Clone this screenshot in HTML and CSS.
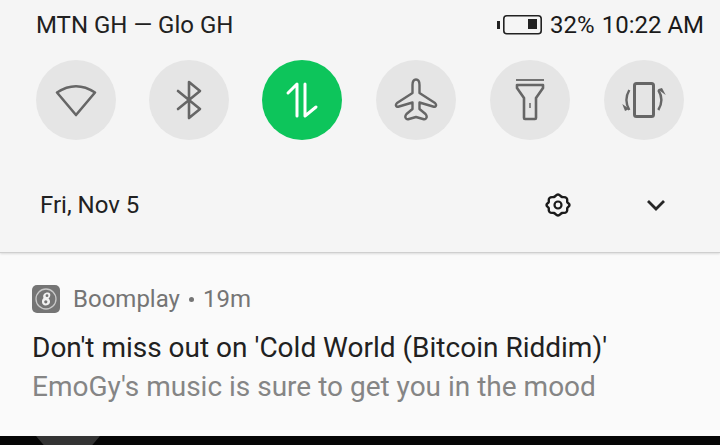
FILE: index.html
```html
<!DOCTYPE html>
<html lang="en">
<head>
    <meta charset="UTF-8">
    <title>Quick settings</title>
    <link rel="stylesheet" href="styles.css">
</head>
<body>
    <div class="shade">
        <div class="status">
            <span class="carrier">MTN GH — Glo GH</span>
            <div class="status-right">
                <svg class="battery" width="45" height="20" viewBox="0 0 45 20">
                    <rect x="0" y="6" width="3" height="8" fill="#222"/>
                    <rect x="6.800" y="0.800" width="37.400" height="18" rx="3" fill="none" stroke="#222" stroke-width="1.600"/>
                    <rect x="31" y="4" width="9" height="10" fill="#222"/>
                </svg>
                <span class="percent">32%</span>
                <span class="clock">10:22 AM</span>
            </div>
        </div>

        <div class="tiles">
            <div class="tile">
                <svg width="44" height="44" viewBox="0 0 44 44"><path d="M3 14.500Q22 2 41 14.500L22 37Z" fill="none" stroke="#666" stroke-width="2.600" stroke-linejoin="round"/></svg>
            </div>
            <div class="tile">
                <svg width="44" height="44" viewBox="0 0 44 44"><path d="M11 13L33 31L22 40V4L33 13L11 31" fill="none" stroke="#666" stroke-width="2.600" stroke-linejoin="round" stroke-linecap="round"/></svg>
            </div>
            <div class="tile tile-on">
                <svg width="44" height="44" viewBox="0 0 44 44"><path d="M8 15L17 6V38M36 29L25 38V6" fill="none" stroke="#fff" stroke-width="3" stroke-linecap="round" stroke-linejoin="round"/></svg>
            </div>
            <div class="tile">
                <svg width="44" height="44" viewBox="0 0 44 44"><path d="M22 1.500C24.500 1.500 25.500 4 25.500 7V15L41 25C43 27 42 29.500 39 28.500L25.500 24.500V31L31.500 36C34 39 32 42 29 41L22 39L15 41C12 42 10 39 12.500 36L18.500 31V24.500L5 28.500C2 29.500 1 27 3 25L18.500 15V7C18.500 4 19.500 1.500 22 1.500Z" fill="none" stroke="#666" stroke-width="2.400" stroke-linejoin="round"/></svg>
            </div>
            <div class="tile">
                <svg width="44" height="44" viewBox="0 0 44 44"><path d="M8 2H36" stroke="#666" stroke-width="1.800"/><path d="M9 7H35V10L28 20V40Q28 41 27 41H17Q16 41 16 40V20L9 10Z" fill="none" stroke="#666" stroke-width="2.600" stroke-linejoin="round"/><path d="M22 25V30" stroke="#666" stroke-width="1.500"/></svg>
            </div>
            <div class="tile">
                <svg width="44" height="44" viewBox="0 0 44 44"><rect x="12.500" y="5.500" width="19" height="33" rx="2" fill="none" stroke="#666" stroke-width="3"/><path d="M7.300 12Q1.500 22 7.300 32M36.300 12Q42.500 22 36.300 32" fill="none" stroke="#666" stroke-width="2.400"/><path d="M0.300 26L7.300 31L3 33Z" fill="#666"/><path d="M43.700 17L35.700 11.300L40 10Z" fill="#666"/></svg>
            </div>
        </div>

        <div class="date-row">
            <span class="date">Fri, Nov 5</span>
            <svg class="gear" width="26" height="26" viewBox="0 0 26 26">
                <path d="M13 2.500C15 2.500 15.500 4.500 17 5C18.500 5.500 20 4.500 21.500 6C23 7.500 21.800 9 22.300 10.200C22.800 11.400 24.500 11.500 24.500 13C24.500 14.500 22.800 14.800 22.300 16C21.800 17.200 23 18.500 21.500 20C20 21.500 18.500 20.500 17 21C15.500 21.500 15 23.500 13 23.500C11 23.500 10.500 21.500 9 21C7.500 20.500 6 21.500 4.500 20C3 18.500 4.200 17.200 3.700 16C3.200 14.800 1.500 14.500 1.500 13C1.500 11.500 3.200 11.400 3.700 10.200C4.200 9 3 7.500 4.500 6C6 4.500 7.500 5.500 9 5C10.500 4.500 11 2.500 13 2.500Z" fill="none" stroke="#1a1a1a" stroke-width="2.400"/>
                <circle cx="13" cy="13" r="3.500" fill="none" stroke="#1a1a1a" stroke-width="2.200"/>
            </svg>
            <svg class="chevron" width="20" height="12" viewBox="0 0 20 12"><path d="M2 2L10 10L18 2" fill="none" stroke="#262626" stroke-width="2.800"/></svg>
        </div>
    </div>

    <div class="notice">
        <div class="notice-head">
            <svg class="app-icon" width="28" height="28" viewBox="0 0 28 28">
                <rect width="28" height="28" rx="5" fill="#757575"/>
                <circle cx="14" cy="14" r="10" fill="none" stroke="#c9c9c9" stroke-width="1.300"/>
                <path d="M16 7.500C12 7.500 10.500 10 11.500 13C9 15 9.500 20.500 13.500 20.500C18 20.500 19.500 16 16.500 13.500C19 11.500 19 7.500 16 7.500Z" fill="#f2f2f2"/>
                <circle cx="15" cy="10.700" r="1.400" fill="#757575"/>
                <circle cx="13.800" cy="16.800" r="1.600" fill="#757575"/>
            </svg>
            <span>Boomplay</span>
            <span class="dot"></span>
            <span>19m</span>
        </div>
        <div class="notice-title">Don't miss out on 'Cold World (Bitcoin Riddim)'</div>
        <div class="notice-text">EmoGy's music is sure to get you in the mood</div>
    </div>

    <div class="bottom">
        <div class="peek"></div>
    </div>
</body>
</html>
```

FILE: styles.css
```css
*{
    padding: 0;
    margin: 0;
    box-sizing: border-box;
}
html, body{
    width: 720px;
    height: 445px;
    overflow: hidden;
}
body{
    display: flex;
    flex-direction: column;
    font-family: Roboto, "Liberation Sans", sans-serif;
    background: #000;
}
.shade{
    height: 253px;
    background: #f5f5f5;
    border-bottom: 1px solid #cfcfcf;
    box-shadow: 0 1px 2px rgba(0,0,0,.12);
    position: relative;
}
.status{
    height: 60px;
    padding: 8px 16px 0 36px;
    display: flex;
    justify-content: space-between;
    align-items: flex-start;
    font-size: 24px;
    line-height: 34px;
    color: #212121;
}
.status-right{
    display: flex;
    align-items: center;
    color: #1a1a1a;
}
.battery{
    margin-right: 8px;
}
.clock{
    margin-left: 7px;
}
.tiles{
    display: flex;
    gap: 33px;
    padding-left: 36px;
}
.tile{
    width: 80px;
    height: 80px;
    border-radius: 50%;
    background: #e5e5e5;
    display: flex;
    align-items: center;
    justify-content: center;
}
.tile:nth-child(n+4){
    margin-left: 1px;
}
.tile-on{
    background: #0dc55b;
}
.date-row{
    display: flex;
    align-items: center;
    height: 112px;
    padding: 18px 0 0 40px;
}
.date{
    font-size: 24px;
    color: #212121;
    width: 505px;
}
.gear{
    margin-right: 74px;
}
.chevron{
    margin-left: 1px;
}
.notice{
    flex: 1;
    background: #fafafa;
    padding: 30px 32px 0;
}
.notice-head{
    display: flex;
    align-items: center;
    font-size: 24px;
    color: #757575;
    height: 34px;
    margin-top: -1px;
}
.app-icon{
    margin-right: 13px;
}
.dot{
    width: 5px;
    height: 5px;
    margin: 0 9px;
    border-radius: 50%;
    background: #757575;
}
.notice-title{
    font-size: 28px;
    line-height: 40px;
    margin-top: 12px;
    color: #212121;
}
.notice-text{
    font-size: 28px;
    line-height: 38px;
    color: #858585;
}
.bottom{
    height: 9px;
    background: #060606;
    overflow: hidden;
    padding-left: 36px;
}
.peek{
    width: 64px;
    height: 9px;
    background: #333;
    clip-path: polygon(0 0, 100% 0, 88% 100%, 12% 100%);
}
```
